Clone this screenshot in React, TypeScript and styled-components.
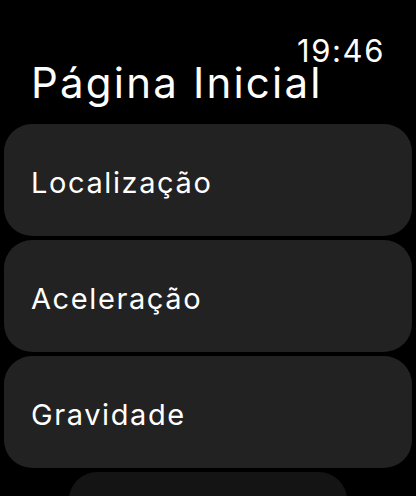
import React from "react";
import styled, { createGlobalStyle } from "styled-components";

const GlobalStyle = createGlobalStyle`
  html, body {
    margin: 0;
    padding: 0;
    background: #000;
  }
  body {
    font-family: Inter, "Noto Sans", sans-serif;
    color: #fff;
    overflow: hidden;
  }
`;

const Screen = styled.div`
  width: 416px;
  height: 496px;
  overflow: hidden;
  display: flex;
  flex-direction: column;
`;

const Header = styled.header`
  display: flex;
  flex-direction: column;
  padding: 40px 31px 0 31px;
  height: 85px;
  box-sizing: border-box;
`;

const Clock = styled.div`
  align-self: flex-end;
  font-size: 31px;
  line-height: 22px;
  font-weight: 400;
  letter-spacing: 1.6px;
`;

const Title = styled.h1`
  margin: 1px 0 0;
  font-size: 42px;
  line-height: 40px;
  font-weight: 400;
  letter-spacing: 2.2px;
  white-space: nowrap;
`;

const List = styled.div`
  display: flex;
  flex-direction: column;
  align-items: center;
  gap: 4px;
  padding-top: 39px;
`;

const Card = styled.div<{ $faded?: boolean }>`
  box-sizing: border-box;
  width: ${(p) => (p.$faded ? "278px" : "408px")};
  height: 112px;
  flex-shrink: 0;
  border-radius: 28px;
  background: ${(p) => (p.$faded ? "#141414" : "#222222")};
  display: flex;
  align-items: center;
  padding: 4px 27px 0;
  font-size: 29px;
  letter-spacing: 1.6px;
`;

const items = ["Localização", "Aceleração", "Gravidade"];

const App: React.FC = () => {
  return (
    <Screen>
      <GlobalStyle />
      <Header>
        <Clock>19:46</Clock>
        <Title>Página Inicial</Title>
      </Header>
      <List>
        {items.map((item) => (
          <Card key={item}>{item}</Card>
        ))}
        <Card $faded />
      </List>
    </Screen>
  );
};

export default App;
